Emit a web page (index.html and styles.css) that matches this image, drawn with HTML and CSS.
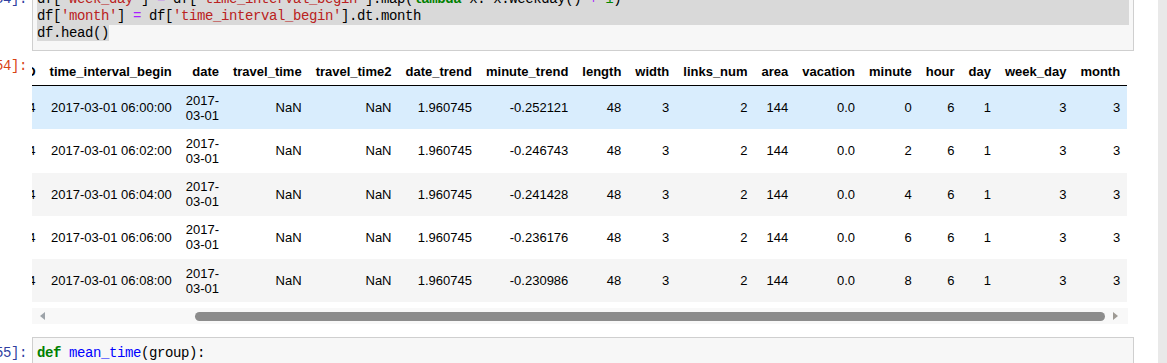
FILE: index.html
```html
<!DOCTYPE html>
<html lang="en">
<head>
<meta charset="utf-8">
<title>Notebook</title>
<link rel="stylesheet" href="styles.css">
</head>
<body>
<div class="notebook">
  <div class="cell">
    <div class="input">
      <div class="prompt in-prompt">In&nbsp;[54]:</div>
      <div class="input-area"><div class="line sel-full">df[<span class="s">'week_day'</span>] <span class="o">=</span> df[<span class="s">'time_interval_begin'</span>].map(<span class="k">lambda</span> x: x.weekday() <span class="o">+</span> <span class="n">1</span>)</div><div class="line sel-full">df[<span class="s">'month'</span>] <span class="o">=</span> df[<span class="s">'time_interval_begin'</span>].dt.month</div><div class="line"><span class="sel">df.head()</span></div></div>
    </div>
    <div class="output">
      <div class="prompt out-prompt">Out[54]:</div>
      <div class="output-area">
        <div class="table-view">
          <table class="dataframe">
            <thead>
              <tr>
                <th></th><th>link_ID</th><th>time_interval_begin</th><th>date</th><th>travel_time</th><th>travel_time2</th><th>date_trend</th><th>minute_trend</th><th>length</th><th>width</th><th>links_num</th><th>area</th><th>vacation</th><th>minute</th><th>hour</th><th>day</th><th>week_day</th><th>month</th>
              </tr>
            </thead>
            <tbody>
              <tr class="hover">
                <th>0</th><td>4377906289869500514</td><td>2017-03-01 06:00:00</td><td>2017-<br>03-01</td><td>NaN</td><td>NaN</td><td>1.960745</td><td>-0.252121</td><td>48</td><td>3</td><td>2</td><td>144</td><td>0.0</td><td>0</td><td>6</td><td>1</td><td>3</td><td>3</td>
              </tr>
              <tr>
                <th>1</th><td>4377906289869500514</td><td>2017-03-01 06:02:00</td><td>2017-<br>03-01</td><td>NaN</td><td>NaN</td><td>1.960745</td><td>-0.246743</td><td>48</td><td>3</td><td>2</td><td>144</td><td>0.0</td><td>2</td><td>6</td><td>1</td><td>3</td><td>3</td>
              </tr>
              <tr>
                <th>2</th><td>4377906289869500514</td><td>2017-03-01 06:04:00</td><td>2017-<br>03-01</td><td>NaN</td><td>NaN</td><td>1.960745</td><td>-0.241428</td><td>48</td><td>3</td><td>2</td><td>144</td><td>0.0</td><td>4</td><td>6</td><td>1</td><td>3</td><td>3</td>
              </tr>
              <tr>
                <th>3</th><td>4377906289869500514</td><td>2017-03-01 06:06:00</td><td>2017-<br>03-01</td><td>NaN</td><td>NaN</td><td>1.960745</td><td>-0.236176</td><td>48</td><td>3</td><td>2</td><td>144</td><td>0.0</td><td>6</td><td>6</td><td>1</td><td>3</td><td>3</td>
              </tr>
              <tr>
                <th>4</th><td>4377906289869500514</td><td>2017-03-01 06:08:00</td><td>2017-<br>03-01</td><td>NaN</td><td>NaN</td><td>1.960745</td><td>-0.230986</td><td>48</td><td>3</td><td>2</td><td>144</td><td>0.0</td><td>8</td><td>6</td><td>1</td><td>3</td><td>3</td>
              </tr>
            </tbody>
          </table>
        </div>
        <div class="hscroll">
          <span class="arrow arrow-left"></span>
          <span class="thumb"></span>
          <span class="arrow arrow-right"></span>
        </div>
      </div>
    </div>
  </div>
  <div class="cell cell-next">
    <div class="input">
      <div class="prompt in-prompt">In&nbsp;[55]:</div>
      <div class="input-area"><div class="line"><span class="k">def</span> <span class="d">mean_time</span>(group):</div></div>
    </div>
  </div>
</div>
</body>
</html>
```

FILE: styles.css
```css
html, body {
  margin: 0;
  padding: 0;
  background: #e9e9e9;
  overflow: hidden;
  height: 363px;
}

.notebook {
  width: 1158px;
  min-height: 400px;
  background: #ffffff;
  margin-top: -17px;
}

.cell {
  padding-right: 24px;
}

.input,
.output {
  display: flex;
}

.prompt {
  flex: 0 0 32px;
  box-sizing: border-box;
  padding-right: 5px;
  display: flex;
  justify-content: flex-end;
  overflow: hidden;
  white-space: nowrap;
  font-family: "Liberation Mono", "DejaVu Sans Mono", monospace;
  font-size: 14px;
  letter-spacing: -0.4px;
  line-height: 17px;
}

.in-prompt {
  color: #303f9f;
  padding-top: 8px;
}

.out-prompt {
  color: #d84315;
  padding-top: 7px;
}

.input-area {
  flex: 1;
  min-width: 0;
  border: 1px solid #cfcfcf;
  background: #f7f7f7;
  padding: 7px 4px 8px;
  font-family: "Liberation Mono", "DejaVu Sans Mono", monospace;
  font-size: 14px;
  letter-spacing: -0.4px;
  line-height: 17px;
  color: #000;
  white-space: pre;
}

.line {
  height: 17px;
}

.sel-full,
.sel {
  background: #d9d9d9;
}

.s { color: #ba2121; }
.o { color: #aa22ff; }
.k { color: #008000; font-weight: bold; }
.n { color: #008800; }
.d { color: #0000ff; }

.output {
  margin-right: 6px;
}

.output-area {
  flex: 1;
  min-width: 0;
  padding-top: 6px;
}

.table-view {
  overflow: hidden;
}

.dataframe {
  border-collapse: collapse;
  border: none;
  margin-left: -162px;
  font-family: "Liberation Sans", Arial, sans-serif;
  font-size: 13px;
  color: #000;
}

.dataframe th,
.dataframe td {
  padding: 6.6px 7px;
  text-align: right;
  vertical-align: middle;
  white-space: nowrap;
  line-height: 15px;
  border: none;
}

.dataframe th {
  font-weight: bold;
}

.dataframe thead th {
  border-bottom: 1px solid #000;
}

.dataframe tbody tr:nth-child(odd) {
  background: #f5f5f5;
}

.dataframe tbody tr.hover {
  background: #d9edfd;
}

.hscroll {
  margin-top: 6px;
  height: 16px;
  background: #f8f8f8;
  display: flex;
  align-items: center;
  padding-left: 8px;
}

.arrow {
  width: 0;
  height: 0;
  border-top: 4px solid transparent;
  border-bottom: 4px solid transparent;
}

.arrow-left {
  border-right: 5px solid #9da3a9;
}

.arrow-right {
  border-left: 5px solid #9e9a94;
  margin-left: 8px;
}

.thumb {
  margin-left: 150px;
  width: 910px;
  height: 9px;
  border-radius: 4.5px;
  background: #8c8c8c;
}

.cell-next {
  margin-top: 13px;
}
```
